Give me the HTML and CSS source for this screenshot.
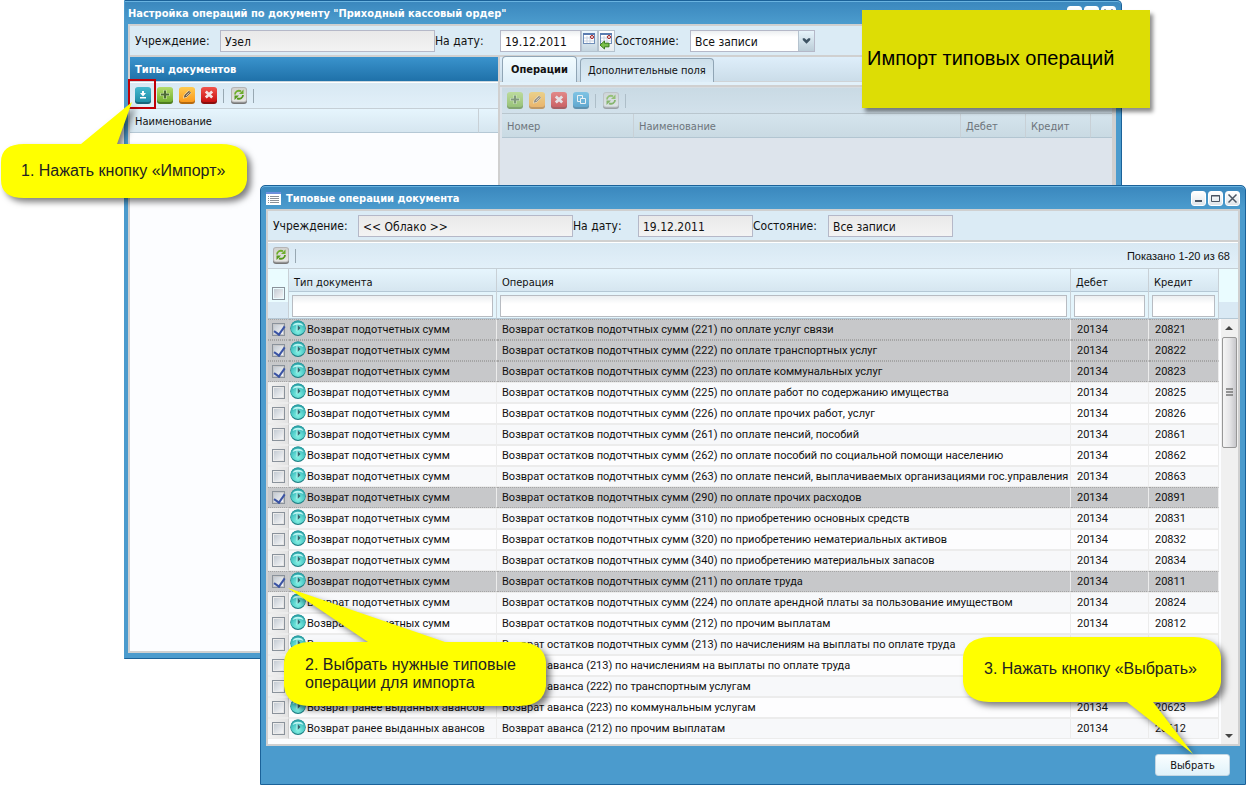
FILE: index.html
```html
<!DOCTYPE html>
<html lang="ru">
<head>
    <meta charset="UTF-8">
    <meta name="viewport" content="width=device-width, initial-scale=1.0">
    <title>Импорт типовых операций</title>
    <link rel="stylesheet" href="styles.css">
</head>
<body>

<svg class="sprite" aria-hidden="true">
    <defs>
        <linearGradient id="gTeal" x1="0" y1="0" x2="0" y2="1"><stop offset="0" stop-color="#45b9cf"/><stop offset="1" stop-color="#1f8ea8"/></linearGradient>
        <linearGradient id="gGreen" x1="0" y1="0" x2="0" y2="1"><stop offset="0" stop-color="#b4dc6c"/><stop offset="1" stop-color="#74b030"/></linearGradient>
        <linearGradient id="gOrange" x1="0" y1="0" x2="0" y2="1"><stop offset="0" stop-color="#ffcb50"/><stop offset="1" stop-color="#fb9a1c"/></linearGradient>
        <linearGradient id="gRed" x1="0" y1="0" x2="0" y2="1"><stop offset="0" stop-color="#f2544c"/><stop offset="1" stop-color="#c8100f"/></linearGradient>
        <linearGradient id="gBlue" x1="0" y1="0" x2="0" y2="1"><stop offset="0" stop-color="#4fb4e4"/><stop offset="1" stop-color="#1a86c0"/></linearGradient>
        <linearGradient id="gGray" x1="0" y1="0" x2="0" y2="1"><stop offset="0" stop-color="#d2d2d0"/><stop offset="1" stop-color="#e6e6e4"/></linearGradient>
        <radialGradient id="gBall" cx=".5" cy=".75" r=".7"><stop offset="0" stop-color="#86f2e4"/><stop offset=".6" stop-color="#4fcbc8"/><stop offset="1" stop-color="#2a9fa4"/></radialGradient>
    </defs>
    <symbol id="import" viewBox="0 0 16 17">
        <rect y="1" width="16" height="16" rx="3" fill="#17667c"/>
        <rect width="16" height="15" rx="3" fill="url(#gTeal)"/>
        <path d="M7 4h2v2h2L8 9.500 5 6h2zM5 10h6v1.500H5z" fill="#fff"/>
    </symbol>
    <symbol id="add" viewBox="0 0 16 17">
        <rect y="1" width="16" height="16" rx="3" fill="#4f7d20"/>
        <rect width="16" height="15" rx="3" fill="url(#gGreen)"/>
        <path d="M8 3v9M3.500 7.500h9" stroke="#d8efb4" stroke-width="3"/>
        <path d="M8 3.500v8M4 7.500h8" stroke="#4d6b36" stroke-width="2"/>
    </symbol>
    <symbol id="edit" viewBox="0 0 16 17">
        <rect y="1" width="16" height="16" rx="3" fill="#b56a10"/>
        <rect width="16" height="15" rx="3" fill="url(#gOrange)"/>
        <path d="M4 11.500l.8-3.500 4.700-4.700 3 2.700-5 4.700z" fill="#ffe6b0"/>
        <path d="M4.800 10.800l.7-2.800 4.500-4.200 2 2-4.500 4.300z" fill="#6d5a48"/>
        <path d="M7 8.800l3.500-3.300" stroke="#d9cdbb"/>
    </symbol>
    <symbol id="delete" viewBox="0 0 16 17">
        <rect y="1" width="16" height="16" rx="3" fill="#8a0d0d"/>
        <rect width="16" height="15" rx="3" fill="url(#gRed)"/>
        <path d="M4.800 4.500l6.400 6M11.200 4.500l-6.400 6" stroke="#f6e4e4" stroke-width="2.800"/>
    </symbol>
    <symbol id="copy" viewBox="0 0 16 17">
        <rect y="1" width="16" height="16" rx="3" fill="#155f8a"/>
        <rect width="16" height="15" rx="3" fill="url(#gBlue)"/>
        <path d="M4.500 3.500h5v6h-5z" fill="none" stroke="#fff"/>
        <path d="M7.500 6.500h5v5h-5z" fill="#2d97cd" stroke="#fff"/>
    </symbol>
    <symbol id="refresh" viewBox="0 0 16 17">
        <rect y="1" width="16" height="16" rx="3" fill="#777"/>
        <rect width="16" height="15.500" rx="3" fill="#b5b5b5"/>
        <rect x="1" y="1" width="14" height="13.500" rx="2" fill="url(#gGray)"/>
        <path d="M4 7.500C4 4.500 7 3 10 4.200" fill="none" stroke="#6fae2c" stroke-width="1.800"/>
        <path d="M12.500 2.500v4.500H8z" fill="#6fae2c"/>
        <path d="M12 8c0 3-3 4.500-6 3.300" fill="none" stroke="#569a1c" stroke-width="1.800"/>
        <path d="M3.500 13V8.500H8z" fill="#569a1c"/>
    </symbol>
    <symbol id="play" viewBox="0 0 16 16">
        <circle cx="8" cy="8.300" r="7.700" fill="#1c7d82"/>
        <circle cx="8" cy="7.700" r="7.300" fill="url(#gBall)"/>
        <path d="M2.500 6a5.800 4.800 0 0 1 11 0 8 4 0 0 0-11 0z" fill="#b9f5f2"/>
        <path d="M7.500 5v6l3-3z" fill="#38616a"/>
        <path d="M7 5v6" stroke="#b5f5f0"/>
    </symbol>
    <symbol id="calendar" viewBox="0 0 14 14">
        <rect x="1.500" y="1.500" width="11" height="10" fill="#fff" stroke="#6f8db8"/>
        <path d="M1 2h12" stroke="#5b7cb0" stroke-width="2"/>
        <path d="M2 6h10M2 9h10M5 4v7M8 4v7" stroke="#c9d3e2"/>
        <circle cx="10" cy="5" r="1.500" fill="#fff" stroke="#a01616"/>
    </symbol>
</svg>

<div class="window window-back">
    <div class="title-bar">
        <span class="title">Настройка операций по документу "Приходный кассовый ордер"</span>
        <button class="tool" aria-label="Свернуть"><svg viewBox="0 0 13 13"><path d="M3 9h7" stroke="#4a5563" stroke-width="2"/></svg></button>
        <button class="tool" aria-label="Развернуть"><svg viewBox="0 0 13 13"><path d="M2.500 3.500h8v6h-8zM2 4h9" fill="none" stroke="#4a5563"/></svg></button>
        <button class="tool" aria-label="Закрыть"><svg viewBox="0 0 13 13"><path d="M2.500 2.500l8 8M10.500 2.500l-8 8" stroke="#4a5563" stroke-width="1.500"/></svg></button>
    </div>
    <div class="window-body">
        <div class="form">
            <label class="label-org" for="org">Учреждение:</label>
            <input class="field field-org readonly" type="text" id="org" value="Узел" readonly>
            <label class="label-date" for="date">На дату:</label>
            <div class="date-box">
                <input class="field" type="text" id="date" value="19.12.2011">
                <button class="trigger" aria-label="Календарь"><svg viewBox="0 0 14 14"><use href="#calendar"/></svg></button>
                <button class="trigger trigger-clear" aria-label="Сегодня"><svg viewBox="0 0 14 18"><use href="#calendar" width="14" height="14"/><path d="M1 13l4.500-4v2.200H10v3.600H5.500V17z" fill="#7cc04a" stroke="#3c7d1e"/></svg></button>
            </div>
            <label class="label-state" for="state">Состояние:</label>
            <div class="select-box">
                <select class="field" id="state"><option>Все записи</option></select>
                <svg class="arrow" viewBox="0 0 16 20"><path d="M4 7h2l2 2 2-2h2v2l-4 4-4-4z" fill="#3e5363"/></svg>
            </div>
        </div>

        <div class="panes">
            <div class="pane pane-types">
                <h2 class="pane-title">Типы документов</h2>
                <div class="toolbar">
                    <button class="icon" aria-label="Импорт"><svg><use href="#import"/></svg></button>
                    <button class="icon" aria-label="Добавить"><svg><use href="#add"/></svg></button>
                    <button class="icon" aria-label="Изменить"><svg><use href="#edit"/></svg></button>
                    <button class="icon" aria-label="Удалить"><svg><use href="#delete"/></svg></button>
                    <span class="separator"></span>
                    <button class="icon" aria-label="Обновить"><svg><use href="#refresh"/></svg></button>
                    <span class="separator"></span>
                </div>
                <table class="list">
                    <colgroup><col><col class="col-gap"></colgroup>
                    <thead><tr><th>Наименование</th><td></td></tr></thead>
                </table>
            </div>
            <div class="pane pane-operations">
                <div class="tabs">
                    <button class="tab active">Операции</button>
                    <button class="tab">Дополнительные поля</button>
                </div>
                <div class="disabled">
                    <div class="toolbar">
                        <button class="icon" aria-label="Добавить" disabled><svg><use href="#add"/></svg></button>
                        <button class="icon" aria-label="Изменить" disabled><svg><use href="#edit"/></svg></button>
                        <button class="icon" aria-label="Удалить" disabled><svg><use href="#delete"/></svg></button>
                        <button class="icon" aria-label="Копировать" disabled><svg><use href="#copy"/></svg></button>
                        <span class="separator"></span>
                        <button class="icon" aria-label="Обновить" disabled><svg><use href="#refresh"/></svg></button>
                        <span class="separator"></span>
                    </div>
                    <table class="list">
                        <colgroup><col class="col-number"><col><col class="col-sum"><col class="col-sum"><col class="col-gap"></colgroup>
                        <thead><tr><th>Номер</th><th>Наименование</th><th>Дебет</th><th>Кредит</th><td></td></tr></thead>
                    </table>
                </div>
            </div>
        </div>
    </div>
</div>

<div class="window window-front">
    <div class="title-bar">
        <svg class="title-icon" viewBox="0 0 15 13"><path d="M0 0h15v13H0z" fill="#fff"/><path d="M0 1h15" stroke="#6d8fdd" stroke-width="2"/><path d="M4 4.500h9M4 6.500h9M4 8.500h9M4 10.500h9M2 4.500h1M2 6.500h1M2 8.500h1M2 10.500h1" stroke="#8a9098"/></svg>
        <span class="title">Типовые операции документа</span>
        <button class="tool" aria-label="Свернуть"><svg viewBox="0 0 13 13"><path d="M3 9h7" stroke="#4a5563" stroke-width="2"/></svg></button>
        <button class="tool" aria-label="Развернуть"><svg viewBox="0 0 13 13"><path d="M2.500 3.500h8v6h-8zM2 4h9" fill="none" stroke="#4a5563"/></svg></button>
        <button class="tool" aria-label="Закрыть"><svg viewBox="0 0 13 13"><path d="M2.500 2.500l8 8M10.500 2.500l-8 8" stroke="#4a5563" stroke-width="1.500"/></svg></button>
    </div>
    <div class="window-body">
        <div class="form">
            <label class="label-org" for="org2">Учреждение:</label>
            <input class="field field-org readonly" type="text" id="org2" value="&lt;&lt; Облако &gt;&gt;" readonly>
            <label class="label-date" for="date2">На дату:</label>
            <input class="field field-date readonly" type="text" id="date2" value="19.12.2011" readonly>
            <label class="label-state" for="state2">Состояние:</label>
            <input class="field field-state readonly" type="text" id="state2" value="Все записи" readonly>
        </div>
        <div class="toolbar">
            <button class="icon" aria-label="Обновить"><svg><use href="#refresh"/></svg></button>
            <span class="separator"></span>
            <span class="paging">Показано 1-20 из 68</span>
        </div>

        <div class="grid">
            <table class="operations">
                <colgroup><col class="col-check"><col class="col-type"><col><col class="col-debit"><col class="col-credit"></colgroup>
                <thead>
                    <tr>
                        <th class="check-all"><input type="checkbox" aria-label="Выбрать все"></th>
                        <th><label for="fType">Тип документа</label><div class="filter"><input type="text" id="fType"></div></th>
                        <th><label for="fOperation">Операция</label><div class="filter"><input type="text" id="fOperation"></div></th>
                        <th><label for="fDebit">Дебет</label><div class="filter"><input type="text" id="fDebit"></div></th>
                        <th><label for="fCredit">Кредит</label><div class="filter"><input type="text" id="fCredit"></div></th>
                    </tr>
                </thead>
                <tbody>
                    <tr class="selected"><td><input type="checkbox" aria-label="20821" checked></td><td><svg><use href="#play"/></svg>Возврат подотчетных сумм</td><td>Возврат остатков подотчтных сумм (221) по оплате услуг связи</td><td>20134</td><td>20821</td></tr>
                    <tr class="selected"><td><input type="checkbox" aria-label="20822" checked></td><td><svg><use href="#play"/></svg>Возврат подотчетных сумм</td><td>Возврат остатков подотчтных сумм (222) по оплате транспортных услуг</td><td>20134</td><td>20822</td></tr>
                    <tr class="selected"><td><input type="checkbox" aria-label="20823" checked></td><td><svg><use href="#play"/></svg>Возврат подотчетных сумм</td><td>Возврат остатков подотчтных сумм (223) по оплате коммунальных услуг</td><td>20134</td><td>20823</td></tr>
                    <tr><td><input type="checkbox" aria-label="20825"></td><td><svg><use href="#play"/></svg>Возврат подотчетных сумм</td><td>Возврат остатков подотчтных сумм (225) по оплате работ по содержанию имущества</td><td>20134</td><td>20825</td></tr>
                    <tr><td><input type="checkbox" aria-label="20826"></td><td><svg><use href="#play"/></svg>Возврат подотчетных сумм</td><td>Возврат остатков подотчтных сумм (226) по оплате прочих работ, услуг</td><td>20134</td><td>20826</td></tr>
                    <tr><td><input type="checkbox" aria-label="20861"></td><td><svg><use href="#play"/></svg>Возврат подотчетных сумм</td><td>Возврат остатков подотчтных сумм (261) по оплате пенсий, пособий</td><td>20134</td><td>20861</td></tr>
                    <tr><td><input type="checkbox" aria-label="20862"></td><td><svg><use href="#play"/></svg>Возврат подотчетных сумм</td><td>Возврат остатков подотчтных сумм (262) по оплате пособий по социальной помощи населению</td><td>20134</td><td>20862</td></tr>
                    <tr><td><input type="checkbox" aria-label="20863"></td><td><svg><use href="#play"/></svg>Возврат подотчетных сумм</td><td>Возврат остатков подотчтных сумм (263) по оплате пенсий, выплачиваемых организациями гос.управления</td><td>20134</td><td>20863</td></tr>
                    <tr class="selected"><td><input type="checkbox" aria-label="20891" checked></td><td><svg><use href="#play"/></svg>Возврат подотчетных сумм</td><td>Возврат остатков подотчтных сумм (290) по оплате прочих расходов</td><td>20134</td><td>20891</td></tr>
                    <tr><td><input type="checkbox" aria-label="20831"></td><td><svg><use href="#play"/></svg>Возврат подотчетных сумм</td><td>Возврат остатков подотчтных сумм (310) по приобретению основных средств</td><td>20134</td><td>20831</td></tr>
                    <tr><td><input type="checkbox" aria-label="20832"></td><td><svg><use href="#play"/></svg>Возврат подотчетных сумм</td><td>Возврат остатков подотчтных сумм (320) по приобретению нематериальных активов</td><td>20134</td><td>20832</td></tr>
                    <tr><td><input type="checkbox" aria-label="20834"></td><td><svg><use href="#play"/></svg>Возврат подотчетных сумм</td><td>Возврат остатков подотчтных сумм (340) по приобретению материальных запасов</td><td>20134</td><td>20834</td></tr>
                    <tr class="selected"><td><input type="checkbox" aria-label="20811" checked></td><td><svg><use href="#play"/></svg>Возврат подотчетных сумм</td><td>Возврат остатков подотчтных сумм (211) по оплате труда</td><td>20134</td><td>20811</td></tr>
                    <tr><td><input type="checkbox" aria-label="20824"></td><td><svg><use href="#play"/></svg>Возврат подотчетных сумм</td><td>Возврат остатков подотчтных сумм (224) по оплате арендной платы за пользование имуществом</td><td>20134</td><td>20824</td></tr>
                    <tr><td><input type="checkbox" aria-label="20812"></td><td><svg><use href="#play"/></svg>Возврат подотчетных сумм</td><td>Возврат остатков подотчтных сумм (212) по прочим выплатам</td><td>20134</td><td>20812</td></tr>
                    <tr><td><input type="checkbox" aria-label="20813"></td><td><svg><use href="#play"/></svg>Возврат подотчетных сумм</td><td>Возврат остатков подотчтных сумм (213) по начислениям на выплаты по оплате труда</td><td>20134</td><td>20813</td></tr>
                    <tr><td><input type="checkbox" aria-label="20613"></td><td><svg><use href="#play"/></svg>Возврат ранее выданных авансов</td><td>Возврат аванса (213) по начислениям на выплаты по оплате труда</td><td>20134</td><td>20613</td></tr>
                    <tr><td><input type="checkbox" aria-label="20622"></td><td><svg><use href="#play"/></svg>Возврат ранее выданных авансов</td><td>Возврат аванса (222) по транспортным услугам</td><td>20134</td><td>20622</td></tr>
                    <tr><td><input type="checkbox" aria-label="20623"></td><td><svg><use href="#play"/></svg>Возврат ранее выданных авансов</td><td>Возврат аванса (223) по коммунальным услугам</td><td>20134</td><td>20623</td></tr>
                    <tr><td><input type="checkbox" aria-label="20612"></td><td><svg><use href="#play"/></svg>Возврат ранее выданных авансов</td><td>Возврат аванса (212) по прочим выплатам</td><td>20134</td><td>20612</td></tr>
                </tbody>
            </table>
            <div class="grid-side">
                <div class="side-head"></div>
                <div class="scrollbar">
                    <svg class="scroll-arrow" viewBox="0 0 16 18"><path d="M4 11l4-4 4 4z" fill="#444"/></svg>
                    <div class="thumb"><svg viewBox="0 0 7 9"><path d="M0 1h7M0 4h7M0 7h7" stroke="#777" stroke-width="1.500"/></svg></div>
                    <svg class="scroll-arrow scroll-down" viewBox="0 0 16 18"><path d="M4 8h8l-4 4z" fill="#444"/></svg>
                </div>
            </div>
        </div>
    </div>
    <div class="footer">
        <button class="button">Выбрать</button>
    </div>
</div>

<!-- подсказки поверх окон -->
<div class="red-frame"></div>
<div class="note">Импорт типовых операций</div>
<div class="callout callout-import">
    <svg viewBox="0 0 247 98"><path d="M24 44H81L132 2 117 44H221Q245 44 247 62V80Q245 98 221 98H24Q1 98 1 80V62Q1 44 24 44z"/></svg>
    <p>1. Нажать кнопку «Импорт»</p>
</div>
<div class="callout callout-rows">
    <svg viewBox="0 0 262 118"><path d="M25 54H84L4 0 161 54H236Q260 55 262 74V98Q260 117 236 118H25Q2 117 0 98V74Q2 55 25 54z"/></svg>
    <p>2. Выбрать нужные типовые операции для импорта</p>
</div>
<div class="callout callout-select">
    <svg viewBox="0 0 258 117"><path d="M26 0H231Q256 1 258 20V45Q256 64 231 65H190L230 117 164 65H26Q2 64 0 45V20Q2 1 26 0z"/></svg>
    <p>3. Нажать кнопку «Выбрать»</p>
</div>

</body>
</html>
```
FILE: styles.css
```css
* {
    box-sizing: border-box;
}

body {
    position: relative;
    margin: 0;
    min-height: 100vh;
    overflow: hidden;
    background-color: #fff;
    font-family: Tahoma, "DejaVu Sans Condensed", "Noto Sans", sans-serif;
    font-size: 11px;
    color: #111;
}

button, input, select {
    font: inherit;
    color: inherit;
    margin: 0;
    padding: 0;
}

button {
    cursor: pointer;
}

.sprite {
    position: absolute;
    width: 0;
    height: 0;
}

/* windows */

.window {
    position: absolute;
    display: flex;
    flex-direction: column;
    border: 1px solid #1b6299;
    background: linear-gradient(#3a87bd, #4b9bcd 22px);
    box-shadow: inset 0 1px 0 #69b3e0;
}

.window-back {
    top: 0;
    left: 124px;
    right: 124px;
    height: 659px;
    border-left-color: #4b9bcd;
    border-radius: 0 5px 0 0;
    padding: 0 5px 5px 3px;
}

.window-front {
    top: 185px;
    left: 260px;
    right: 0;
    border-radius: 5px 5px 0 0;
    padding: 0 5px;
}

.title-bar {
    display: flex;
    align-items: center;
    gap: 2px;
    height: 23px;
    padding-top: 1px;
    color: #fff;
    font-weight: bold;
}

.title {
    flex: 1;
    white-space: nowrap;
}

.title-icon {
    width: 15px;
    height: 13px;
    margin-right: 3px;
}

.tool {
    width: 15px;
    height: 15px;
    border: 1px solid #fff;
    border-radius: 3px;
    background: linear-gradient(#fff, #dfe5ea);
}

.tool svg {
    display: block;
    width: 13px;
    height: 13px;
}

.window-body {
    flex: 1;
    display: flex;
    flex-direction: column;
    border: 2px solid #d0d0d0;
    background-color: #fcfdff;
}

.window-back .window-body {
    border-right-width: 4px;
}

/* form row */

.form {
    display: flex;
    align-items: center;
    height: 31px;
    padding-left: 5px;
    border-bottom: 2px solid #d0d0d0;
    background-color: #dbebf5;
    font-size: 12px;
}

.label-org {
    width: 85px;
}

.label-date {
    width: 65px;
}

.label-state {
    width: 75px;
}

.field {
    width: 100%;
    height: 22px;
    padding: 2px 4px 0;
    border: 1px solid #b5b8c8;
    border-radius: 0;
    background: linear-gradient(#eceff1, #fff 6px);
}

.readonly {
    background: linear-gradient(#e9e9e9, #f3f3f3);
}

.field-org {
    width: 215px;
}

.field-date {
    width: 115px;
}

.field-state {
    width: 125px;
}

.date-box {
    display: flex;
    width: 115px;
}

.date-box .field {
    flex: 1;
    min-width: 0;
}

.trigger {
    width: 17px;
    height: 22px;
    border: 1px solid #b5c3cf;
    background: linear-gradient(#eef8fd, #c5d5e0);
}

.trigger svg {
    display: block;
    width: 14px;
    height: 14px;
    margin-top: -4px;
}

.trigger-clear {
    background: linear-gradient(#fff, #e6ecf0);
}

.trigger-clear svg {
    height: 18px;
    margin-top: 0;
}

.select-box {
    position: relative;
    width: 125px;
}

.select-box select {
    appearance: none;
}

.select-box .arrow {
    position: absolute;
    top: 1px;
    right: 1px;
    width: 16px;
    height: 20px;
    border-left: 1px solid #b5c3cf;
    background: linear-gradient(#e6f4fb, #bccdd8);
    pointer-events: none;
}

/* panes of the back window */

.panes {
    flex: 1;
    display: flex;
}

.pane {
    display: flex;
    flex-direction: column;
}

.pane-types {
    width: 370px;
    border-right: 2px solid #d0d0d0;
}

.pane-operations {
    flex: 1;
}

.pane-title {
    height: 25px;
    margin: 0;
    padding-left: 5px;
    border-bottom: 1px solid #c9d6df;
    background: linear-gradient(#3a93cd, #1f71a9);
    color: #fff;
    font-size: 11px;
    line-height: 26px;
}

.toolbar {
    display: flex;
    align-items: center;
    gap: 6px;
    height: 27px;
    padding: 0 8px 0 5px;
    border-top: 1px solid #fff;
    border-bottom: 1px solid #c5cfd6;
    background: linear-gradient(#d8e8f3, #e2f0f9);
}

.icon {
    width: 16px;
    height: 17px;
    border: 0;
    background: none;
}

.icon svg {
    display: block;
    width: 16px;
    height: 17px;
}

.separator {
    width: 1px;
    height: 14px;
    background-color: #98a8b2;
}

.separator:not(:last-child) {
    margin: 0 1px 0 0;
}

.paging {
    margin-left: auto;
    font-family: "Liberation Sans", Arial, sans-serif;
}

.list {
    width: 100%;
    border-collapse: separate;
    border-spacing: 0;
    table-layout: fixed;
}

.list th, .list td {
    height: 24px;
    padding: 2px 5px 0;
    border-right: 1px solid #c8d0d6;
    border-bottom: 1px solid #b5c8d5;
    background: linear-gradient(#e6f5fd, #d6e6f0);
    font-weight: normal;
    text-align: left;
}

.list td {
    border-right: 0;
}

.col-gap {
    width: 19px;
}

.disabled .col-gap {
    width: 21px;
}

.col-number {
    width: 132px;
}

.col-sum {
    width: 65px;
}

.tabs {
    display: flex;
    align-items: flex-end;
    gap: 3px;
    height: 28px;
    padding: 1px 2px 3px;
    background: linear-gradient(#deeefa, #cbdde9 24px, #cfd3d6 24px, #cfd3d6 25px, #e2f1fa 25px);
}

.tab {
    height: 24px;
    padding: 0 7px;
    border: 1px solid #90a5b5;
    border-bottom: 0;
    border-radius: 4px 4px 0 0;
    background: linear-gradient(#cddfea, #dcecf7);
}

.tab.active {
    height: 26px;
    padding: 0 8px;
    background: linear-gradient(#f2fcff, #deeef8);
    font-weight: bold;
}

.disabled {
    flex: 1;
    padding-left: 2px;
    border-top: 2px solid #d0d0d0;
    background-color: #dde4ec;
    color: #6d757c;
}

.disabled .toolbar {
    border-top-color: #d5dde3;
    border-bottom-color: #b9c6ce;
    background: linear-gradient(#c9dae4, #d2e1eb);
}

.disabled .icon, .disabled .separator {
    opacity: 0.6;
}

.disabled .list th, .disabled .list td {
    border-bottom-color: #b2c5d1;
    background: linear-gradient(#d5e4ed, #c9dae3);
}

/* table of operations */

.grid {
    display: flex;
    padding-bottom: 5px;
}

.operations {
    flex: 1;
    border-collapse: separate;
    border-spacing: 0;
    table-layout: fixed;
    width: 100%;
}

.col-check {
    width: 21px;
}

.col-type {
    width: 208px;
}

.col-debit {
    width: 78px;
}

.col-credit {
    width: 70px;
}

.operations th {
    height: 50px;
    padding: 0;
    border-right: 1px solid #c8d0d6;
    border-bottom: 1px solid #b5c8d5;
    background-color: #e4f5fc;
    font-weight: normal;
    text-align: left;
    vertical-align: top;
}

.operations th label {
    display: block;
    height: 23px;
    padding-left: 5px;
    border-bottom: 1px solid #b5c8d5;
    background: linear-gradient(#e6f5fd, #d6e6f0);
    line-height: 27px;
}

.filter {
    padding: 3px 3px 1px;
}

.filter input {
    display: block;
    width: 100%;
    height: 22px;
    padding: 0 3px;
    border: 1px solid #b8bcc2;
    background: linear-gradient(#eceff1, #fff 8px);
}

.operations th.check-all, .side-head {
    background: linear-gradient(#eafcff 33px, #d9e9f4 33px);
}

.operations th.check-all {
    padding: 18px 0 0 4px;
}

.operations td {
    height: 21px;
    padding: 0 0 0 6px;
    overflow: hidden;
    border: solid #ececec;
    border-width: 1px 1px 1px 0;
    background-color: #fdfdfe;
    font-family: Roboto, Tahoma, sans-serif;
    line-height: 19px;
    white-space: nowrap;
}

.operations tr:nth-child(even) td {
    background-color: #f7f8fa;
}

.operations td:first-child {
    padding: 0 0 0 4px;
    border-right-color: #ccc;
    background: linear-gradient(90deg, #f2f2f2, #e2e2e2);
}

.operations td:nth-child(2) {
    padding-left: 1px;
}

.operations td:nth-child(3) {
    padding-left: 5px;
}

.operations tr.selected td {
    border-top: 1px dotted #a5a5a5;
    border-bottom: 1px dotted #a5a5a5;
    background: #c7c8ca;
}

.operations td svg {
    width: 16px;
    height: 16px;
    margin-right: 1px;
    vertical-align: -3px;
}

input[type="checkbox"] {
    position: relative;
    display: block;
    width: 13px;
    height: 13px;
    appearance: none;
    border: 1px solid #8a929b;
    background: linear-gradient(135deg, #c4cbd3, #f4f5f7) content-box #f6f6f6;
    padding: 1px;
}

input[type="checkbox"]:checked::after {
    content: "";
    position: absolute;
    top: 0;
    left: 3px;
    width: 5px;
    height: 9px;
    border: solid #3a53a4;
    border-width: 0 2px 2px 0;
    transform: rotate(35deg);
}

.grid-side {
    display: flex;
    flex-direction: column;
    width: 19px;
}

.side-head {
    height: 50px;
    border-bottom: 1px solid #b5c8d5;
}

.scrollbar {
    flex: 1;
    display: flex;
    flex-direction: column;
    width: 17px;
    margin: 0 0 -5px 2px;
    background-color: #f0f0f0;
}

.scroll-arrow {
    width: 16px;
    height: 18px;
}

.scroll-down {
    margin-top: auto;
}

.thumb {
    display: flex;
    align-items: center;
    justify-content: center;
    width: 15px;
    height: 111px;
    margin-left: 1px;
    border: 1px solid #979797;
    border-radius: 2px;
    background: linear-gradient(90deg, #f5f5f5, #e6e6e8 50%, #c6c6ca);
}

.thumb svg {
    width: 7px;
    height: 9px;
}

.footer {
    display: flex;
    justify-content: flex-end;
    padding: 8px 10px 8px;
}

.button {
    width: 75px;
    height: 22px;
    border: 1px solid #c4d6e2;
    border-radius: 3px;
    background: linear-gradient(#fafeff, #e0f2fa);
}

/* annotations */

.red-frame {
    position: absolute;
    top: 79px;
    left: 128px;
    width: 28px;
    height: 30px;
    border: 2px solid #c00008;
}

.note {
    position: absolute;
    top: 10px;
    right: 96px;
    width: 288px;
    height: 98px;
    padding-left: 5px;
    background-color: #dddd05;
    box-shadow: 3px 4px 4px rgba(0, 0, 0, 0.45);
    color: #000;
    font: 20px/96px "Liberation Sans", Arial, sans-serif;
}

.callout {
    position: absolute;
    color: #222;
    font: 16px/18px "Liberation Sans", Arial, sans-serif;
}

.callout svg {
    display: block;
    width: 100%;
    overflow: visible;
    fill: #ff0;
    filter: drop-shadow(4px 4px 3px rgba(0, 0, 0, 0.5));
}

.callout p {
    position: absolute;
    left: 21px;
    margin: 0;
}

.callout-import {
    top: 100px;
    left: 0;
    width: 247px;
}

.callout-import p {
    top: 62px;
}

.callout-rows {
    top: 588px;
    left: 284px;
    width: 262px;
}

.callout-rows p {
    top: 68px;
}

.callout-select {
    top: 637px;
    right: 25px;
    width: 258px;
}

.callout-select p {
    top: 23px;
}
```
